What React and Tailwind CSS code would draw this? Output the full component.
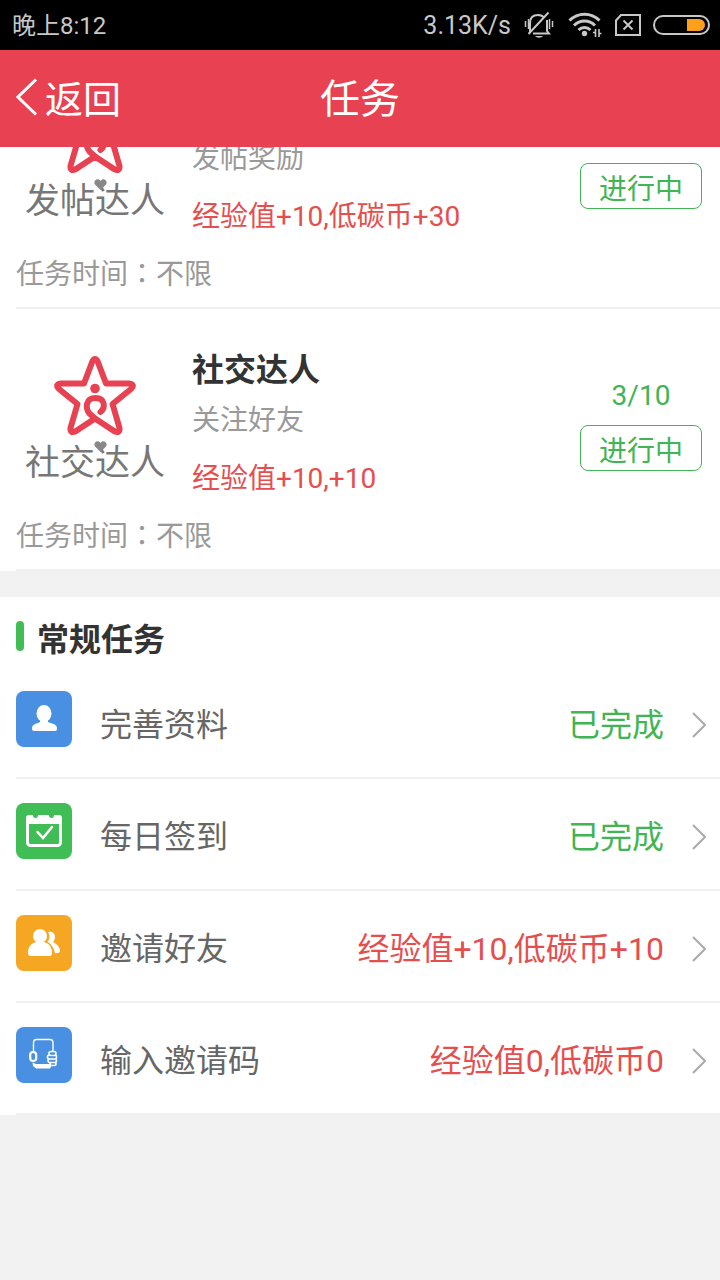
import React from "react";

function StatusBar() {
  return (
    <div className="flex h-[50px] items-center bg-black pl-3 pr-[10px] text-[25px] text-[#c8c8c8]">
      <span className="grow pt-[2px] text-[24px]">晚上8:12</span>
      <span className="mr-[13px] pt-[2px]">3.13K/s</span>
      <svg className="mr-[14px]" width="30" height="28" viewBox="0 0 30 28" fill="none" stroke="#c8c8c8" strokeWidth="2">
        <path d="M6 21V12C6 7 9 4 14 4C17 4 19 5 20.500 7M23 9V20L25 22.500H9M24.500 1.500L4.500 23" />
        <path d="M11 25C13 27.300 17 27.300 19 25Z" fill="#c8c8c8" stroke="none" />
        <path d="M1.500 10v6M4.500 8v10M25.500 8v10M28.500 10v6" strokeWidth="1.500" />
      </svg>
      <svg className="mr-[13px]" width="34" height="28" viewBox="0 0 34 28" fill="none" stroke="#c8c8c8" strokeWidth="3">
        <path d="M1.500 9.500C10 1 23 1 31.500 9.500M6 14.500C12 8.500 21 8.500 27 14.500M10.500 19C14 15.500 19 15.500 22.500 19" />
        <circle cx="16.500" cy="22.500" r="2.700" fill="#c8c8c8" stroke="none" />
        <path d="M27.500 18v8M31 18v8M25 21.500h2.500M31 22.500h2.500" strokeWidth="1.600" />
      </svg>
      <svg className="mr-3" width="26" height="22" viewBox="0 0 26 22" fill="none" stroke="#c8c8c8" strokeWidth="2">
        <path d="M6 1H25V21H1V6.500Z" />
        <path d="M8.500 6.500l9 9M17.500 6.500l-9 9" />
      </svg>
      <svg width="57" height="20" viewBox="0 0 57 20" fill="none">
        <rect x="1" y="1" width="55" height="18" rx="9" stroke="#c8c8c8" strokeWidth="2" />
        <path d="M34 4H46A6 6 0 0 1 46 16H34Z" fill="#ff9f1c" />
      </svg>
    </div>
  );
}

function Header() {
  return (
    <header className="grid h-[97px] grid-cols-3 items-center bg-[#e84152] px-4 text-white">
      <button type="button" className="flex items-center gap-[7px] text-left text-[38px] leading-none">
        <svg className="-mt-1" width="22" height="38" viewBox="0 0 22 38" fill="none" stroke="currentColor" strokeWidth="3">
          <path d="M20 1.500L2 19L20 36.500" />
        </svg>
        <span className="pt-[2px]">返回</span>
      </button>
      <h1 className="pt-[2px] text-center text-[40px] leading-none">任务</h1>
    </header>
  );
}

function Badge({ name }) {
  return (
    <div className="flex w-[138px] shrink-0 flex-col items-center">
      <svg width="86" height="82" viewBox="0 0 86 82" fill="none" stroke="#e84152" strokeWidth="6" strokeLinejoin="round" strokeLinecap="round">
        <path d="M40.500 6Q43 2 45.500 6L54 28.500L77 28.500Q83.500 29.500 79 34L60.500 49L67.500 73Q68 79 62 76L43 63.500L24 76Q18 79 18.500 73L25.500 49L7 34Q2.500 29.500 9 28.500L32 28.500Z" />
        <path d="M48.500 57C53.500 53 53.500 43 43.500 43C33.500 43 33 53 37.500 58.500L43 63.500" />
        <circle cx="43" cy="33.500" r="4.800" fill="#e84152" stroke="none" />
      </svg>
      <div className="relative whitespace-nowrap pt-1 text-[35px] leading-[46px] text-[#777]">
        {name}
        <svg className="absolute left-[69px] top-1" width="13" height="11" viewBox="0 0 13 11" fill="#888">
          <path d="M6.500 11L1 5.500C-1.500 1.500 4-2 6.500 2C9-2 14.500 1.500 12 5.500Z" />
        </svg>
      </div>
    </div>
  );
}

function Task({ badge, title, desc, reward, progress }) {
  return (
    <li className="h-[262px] pl-4">
      <div className="flex h-full flex-col justify-between border-b-2 border-[#f0f0f0]">
        <div className="flex pl-[10px] pr-[18px] pt-[38px]">
          <div className="pt-2">
            <Badge name={badge} />
          </div>
          <div className="ml-7 grow">
            <div className="h-[46px]">
              {title && <h2 className="text-[32px] font-bold leading-[46px] text-[#333]">{title}</h2>}
            </div>
            <p className="pt-[5px] text-[28px] leading-[46px] text-[#999]">{desc}</p>
            <p className="pt-3 text-[28px] leading-[46px] text-[#e64e4e]">{reward}</p>
          </div>
          <div className="flex w-[122px] flex-col items-center pt-[28px] text-[28px] text-[#41b453]">
            <div className="h-[40px] leading-[42px]">{progress && <span>{progress}</span>}</div>
            <button type="button" className="mt-[10px] h-[46px] w-full rounded-lg border border-[#41b453] pt-2 leading-9">
              进行中
            </button>
          </div>
        </div>
        <p className="pb-[11px] text-[28px] leading-[42px] text-[#999]">
          任务时间<span className="font-[Noto_Sans_CJK_TC]">：</span>不限
        </p>
      </div>
    </li>
  );
}

function PersonIcon() {
  return (
    <svg width="56" height="56" viewBox="0 0 56 56" fill="#fff">
      <ellipse cx="28" cy="22.500" rx="7.500" ry="8.500" />
      <path d="M24 28H32V31C35 32.500 41 33 41 37V38Q41 40 39 40H18Q16 40 16 38V37C16 33 22 32.500 24 31Z" />
    </svg>
  );
}

function CalendarIcon() {
  return (
    <svg width="56" height="56" viewBox="0 0 56 56" fill="none" stroke="#fff">
      <path d="M10 15Q10 12 13 12H17Q17 15 19.500 15T22 12H33Q33 15 35.500 15T38 12H43Q46 12 46 15V21H10Z" fill="#fff" stroke="none" />
      <rect x="11.500" y="18.500" width="33" height="24" rx="3" strokeWidth="3" />
      <path d="M21.500 29L27 35L36 24" strokeWidth="2.500" strokeLinecap="round" />
    </svg>
  );
}

function FriendsIcon() {
  return (
    <svg width="56" height="56" viewBox="0 0 56 56" fill="#fff">
      <circle cx="24" cy="21" r="7" />
      <path d="M12 38C12 31 16 28 20 27H28C32 28 36 31 36 38Q36 41 33.500 41H14.500Q12 41 12 38Z" />
      <path d="M32 17C36 16 39 18 39 22C39 24 38 26 37 27C41 29 44 32 44 36C44 38 41 38.500 39 38C38 33 35.500 29 31.500 27C34 24 34 20 32 17Z" />
    </svg>
  );
}

function PhoneIcon() {
  return (
    <svg width="56" height="56" viewBox="0 0 56 56" fill="none" stroke="#fff" strokeWidth="1.600">
      <path d="M17.500 24V16Q17.500 12.500 20.500 12.500H34Q37 12.500 37 16V24" strokeWidth="1.400" />
      <path d="M16.500 35.500L20 37H35V39.500L34 41.500H20L17 39Z" fill="#fff" stroke="none" />
      <rect x="14.200" y="25" width="6" height="9" rx="3" strokeWidth="2.200" />
      <g fill="#4a90e2">
        <rect x="34" y="35" width="6" height="3.500" rx="1.700" />
        <rect x="32" y="31.500" width="8.500" height="4" rx="2" />
        <rect x="31.500" y="28" width="9" height="4" rx="2" />
        <rect x="33" y="24.500" width="7" height="4" rx="2" />
      </g>
    </svg>
  );
}

function Row({ icon, tile, label, value, tone }) {
  return (
    <li className="pl-4">
      <a href="#" className="flex h-28 items-center border-b-2 border-[#f0f0f0] pr-[14px] text-[32px]">
        <span className={`-mt-[6px] h-14 w-14 shrink-0 rounded-lg ${tile}`}>{icon}</span>
        <span className="ml-7 grow pt-[6px] text-[#666]">{label}</span>
        <span className={`pt-[6px] ${tone}`}>{value}</span>
        <svg className="ml-7 mt-[6px]" width="14" height="26" viewBox="0 0 14 26" fill="none" stroke="#aaa" strokeWidth="2">
          <path d="M1 1L13 13L1 25" />
        </svg>
      </a>
    </li>
  );
}

export default function App() {
  return (
    <div className="min-h-screen bg-[#f2f2f2] font-[Roboto,Noto_Sans_CJK_SC,sans-serif]">
      <StatusBar />
      <Header />
      <main>
        <section className="overflow-hidden">
          <ul className="-mt-[100px] bg-white">
            <Task badge="发帖达人" desc="发帖奖励" reward="经验值+10,低碳币+30" />
            <Task badge="社交达人" title="社交达人" desc="关注好友" reward="经验值+10,+10" progress="3/10" />
          </ul>
        </section>
        <section className="mt-[26px] bg-white">
          <div className="flex h-[70px] items-center gap-[13px] pl-4 pt-[10px]">
            <span className="-mt-[2px] h-[30px] w-2 rounded-full bg-[#41bd55]" />
            <h2 className="pt-[6px] text-[32px] font-bold text-[#333]">常规任务</h2>
          </div>
          <ul>
            <Row icon={<PersonIcon />} tile="bg-[#4a90e2]" label="完善资料" value="已完成" tone="text-[#41b453]" />
            <Row icon={<CalendarIcon />} tile="bg-[#41bd55]" label="每日签到" value="已完成" tone="text-[#41b453]" />
            <Row icon={<FriendsIcon />} tile="bg-[#f5a623]" label="邀请好友" value="经验值+10,低碳币+10" tone="text-[#e64e4e]" />
            <Row icon={<PhoneIcon />} tile="bg-[#4a90e2]" label="输入邀请码" value="经验值0,低碳币0" tone="text-[#e64e4e]" />
          </ul>
        </section>
      </main>
    </div>
  );
}
